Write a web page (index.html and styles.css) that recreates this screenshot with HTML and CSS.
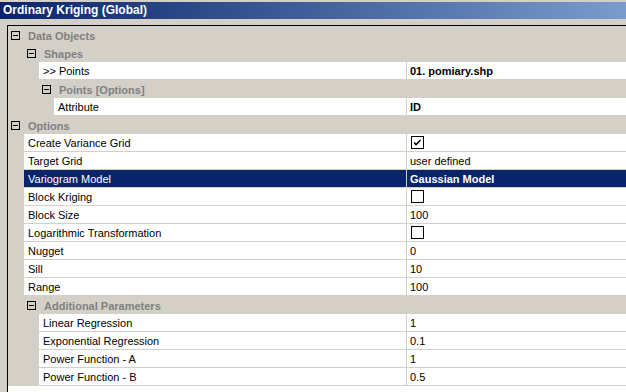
FILE: index.html
```html
<!DOCTYPE html>
<html>
<head>
<meta charset="utf-8">
<link rel="stylesheet" href="styles.css">
</head>
<body>
<div class="window">
  <div class="titlebar">Ordinary Kriging (Global)</div>
  <div class="gap"></div>
  <div class="grid">
    <div class="row cat l0"><span class="box"></span><span class="ctext">Data Objects</span></div>
    <div class="row cat l1"><span class="box"></span><span class="ctext">Shapes</span></div>
    <div class="row prop"><div class="name"><span class="indent i2"></span><span class="label">&gt;&gt; Points</span></div><div class="value bold">01. pomiary.shp</div></div>
    <div class="row cat l2"><span class="box"></span><span class="ctext">Points [Options]</span></div>
    <div class="row prop"><div class="name"><span class="indent i3"></span><span class="label">Attribute</span></div><div class="value bold">ID</div></div>
    <div class="row cat l0"><span class="box"></span><span class="ctext">Options</span></div>
    <div class="row prop"><div class="name"><span class="indent i1"></span><span class="label">Create Variance Grid</span></div><div class="value"><span class="check checked"><svg width="11" height="11" viewBox="0 0 11 11"><path d="M2 4.5 L4 6.5 L8.5 2 L8.5 4.2 L4 8.7 L2 6.7 Z" fill="#000"/></svg></span></div></div>
    <div class="row prop"><div class="name"><span class="indent i1"></span><span class="label">Target Grid</span></div><div class="value">user defined</div></div>
    <div class="row prop sel"><div class="name"><span class="indent i1"></span><span class="label">Variogram Model</span></div><div class="value bold">Gaussian Model</div></div>
    <div class="row prop"><div class="name"><span class="indent i1"></span><span class="label">Block Kriging</span></div><div class="value"><span class="check"></span></div></div>
    <div class="row prop"><div class="name"><span class="indent i1"></span><span class="label">Block Size</span></div><div class="value">100</div></div>
    <div class="row prop"><div class="name"><span class="indent i1"></span><span class="label">Logarithmic Transformation</span></div><div class="value"><span class="check"></span></div></div>
    <div class="row prop"><div class="name"><span class="indent i1"></span><span class="label">Nugget</span></div><div class="value">0</div></div>
    <div class="row prop"><div class="name"><span class="indent i1"></span><span class="label">Sill</span></div><div class="value">10</div></div>
    <div class="row prop"><div class="name"><span class="indent i1"></span><span class="label">Range</span></div><div class="value">100</div></div>
    <div class="row cat l1"><span class="box"></span><span class="ctext">Additional Parameters</span></div>
    <div class="row prop"><div class="name"><span class="indent i2"></span><span class="label">Linear Regression</span></div><div class="value">1</div></div>
    <div class="row prop"><div class="name"><span class="indent i2"></span><span class="label">Exponential Regression</span></div><div class="value">0.1</div></div>
    <div class="row prop"><div class="name"><span class="indent i2"></span><span class="label">Power Function - A</span></div><div class="value">1</div></div>
    <div class="row prop"><div class="name"><span class="indent i2"></span><span class="label">Power Function - B</span></div><div class="value">0.5</div></div>
  </div>
</div>
</body>
</html>
```
FILE: styles.css
```css
html, body {
  margin: 0;
  padding: 0;
  background: #d4d0c8;
  width: 626px;
  height: 392px;
  overflow: hidden;
}
.window {
  padding-top: 2px;
  font-family: "Liberation Sans", Arial, sans-serif;
  font-size: 11px;
  color: #000;
}
.titlebar {
  height: 17px;
  line-height: 17px;
  padding-left: 3px;
  color: #fff;
  font-weight: bold;
  font-size: 12px;
  background: linear-gradient(to right, #0a246a, #7b9bcd);
}
.gap {
  height: 6px;
}
.grid {
  margin-left: 7px;
  border-top: 1px solid #000;
  border-left: 1px solid #000;
  background: #fff;
  height: 366px;
  width: 618px;
  overflow: hidden;
}
.row {
  height: 18px;
  display: flex;
  align-items: stretch;
  box-sizing: border-box;
}
.cat {
  background: #d4d0c8;
  align-items: center;
  padding-top: 1px;
}
.cat .ctext {
  color: #808080;
  font-weight: bold;
  margin-left: 8px;
}
.box {
  width: 9px;
  height: 9px;
  box-sizing: border-box;
  border: 1px solid #000;
  position: relative;
  background: #d4d0c8;
}
.box::after {
  content: "";
  position: absolute;
  left: 1px;
  top: 3px;
  width: 5px;
  height: 1px;
  background: #000;
}
.l0 { padding-left: 3px; }
.l1 { padding-left: 19px; }
.l2 { padding-left: 34px; }
.name {
  width: 398px;
  display: flex;
  flex: none;
}
.indent {
  background: #d4d0c8;
  flex: none;
}
.i1 { width: 16px; }
.i2 { width: 31px; }
.i3 { width: 46px; }
.label {
  flex: 1;
  background: #fff;
  border-bottom: 1px solid #d4d0c8;
  padding-left: 4px;
  padding-top: 1px;
  line-height: 16px;
  white-space: nowrap;
}
.value {
  flex: 1;
  background: #fff;
  border-left: 1px solid #d4d0c8;
  border-bottom: 1px solid #d4d0c8;
  padding-left: 3px;
  padding-top: 1px;
  line-height: 16px;
  white-space: nowrap;
  display: flex;
  align-items: center;
}
.bold { font-weight: bold; }
.sel .label, .sel .value {
  background: #0a246a;
  color: #fff;
}
.check {
  width: 13px;
  height: 13px;
  box-sizing: border-box;
  border: 1px solid #000;
  background: #fff;
  margin-left: 1px;
  margin-top: -1px;
  display: flex;
  align-items: center;
  justify-content: center;
}
.check svg { display: block; }
```
